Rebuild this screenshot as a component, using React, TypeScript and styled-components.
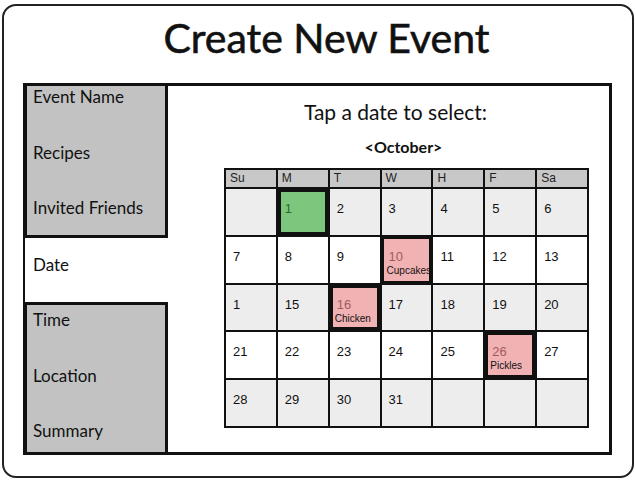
import React from "react";
import styled, { createGlobalStyle, css } from "styled-components";

const GlobalStyle = createGlobalStyle`
  html, body {
    margin: 0;
    padding: 0;
    background: #fff;
  }
  body {
    font-family: "Lato", "Open Sans", sans-serif;
    color: #111;
  }
`;

const Frame = styled.div`
  box-sizing: border-box;
  width: 632px;
  height: 474px;
  margin: 4px 0 0 2px;
  border: 2px solid #222;
  border-radius: 14px;
  padding: 0 20px 21px 19px;
  display: flex;
  flex-direction: column;
`;

const Title = styled.h1`
  margin: 0;
  height: 77px;
  box-sizing: border-box;
  padding: 8px 0 0 18px;
  line-height: 48px;
  text-align: center;
  font-size: 41px;
  font-weight: 400;
  color: #111;
  -webkit-text-stroke: 0.6px #111;
`;

const Body = styled.div`
  flex: 1;
  display: flex;
`;

const TabColumn = styled.div`
  width: 145px;
  display: flex;
  flex-direction: column;
`;

const TabGroup = styled.div<{ $height: number; $top: number }>`
  box-sizing: border-box;
  height: ${p => p.$height}px;
  background: #c2c2c2;
  border: 3px solid #111;
  border-left-width: 4px;
  padding: ${p => p.$top}px 6px 0;
  display: flex;
  flex-direction: column;
  gap: 35.7px;
`;

const TabLabel = styled.div`
  font-size: 17px;
  line-height: 20px;
  color: #111;
  white-space: nowrap;
`;

const ActiveTab = styled.div`
  box-sizing: border-box;
  height: 64px;
  border-left: 2px solid #111;
  padding: 17px 0 0 8px;
  background: #fff;
`;

const Panel = styled.div`
  flex: 1;
  border: 3px solid #111;
  border-left: none;
  display: flex;
  flex-direction: column;
  align-items: center;
  padding: 0 20px 0 56px;
`;

const Prompt = styled.div`
  margin: 13px 22px 0 0;
  font-size: 21px;
  line-height: 26px;
`;

const MonthNav = styled.div`
  margin: 12px 6px 0 0;
  font-size: 16px;
  font-weight: 700;
  line-height: 20px;
`;

const Calendar = styled.div`
  box-sizing: border-box;
  margin-top: 11px;
  width: 365px;
  border: 2px solid #111;
  background: #111;
  display: grid;
  grid-template-columns: repeat(7, 1fr);
  grid-template-rows: 17px repeat(5, 45.8px);
  gap: 2px;
  font-family: "Liberation Sans", Arial, sans-serif;
`;

const DayHead = styled.div`
  background: #c8c8c8;
  font-size: 12px;
  line-height: 16px;
  padding-left: 4px;
  color: #222;
`;

type Tone = "green" | "pink";

const Cell = styled.div<{ $shade: boolean; $tone?: Tone; $ring?: number }>`
  background: ${p => (p.$shade ? "#ededed" : "#fff")};
  padding: 12px 0 0 7px;
  box-sizing: border-box;
  ${p =>
    p.$tone === "green" &&
    css`
      background: #7cc67e;
    `}
  ${p =>
    p.$tone === "pink" &&
    css`
      background: #f1b2b3;
    `}
  ${p =>
    p.$ring &&
    css`
      box-shadow: inset 0 0 0 ${p.$ring}px #111;
    `}
`;

const DayNum = styled.div<{ $tone?: Tone }>`
  font-size: 13px;
  line-height: 16px;
  color: ${p =>
    p.$tone === "green" ? "#2f6a2f" : p.$tone === "pink" ? "#a35a5c" : "#111"};
`;

const EventName = styled.div`
  margin-left: -2px;
  font-size: 10px;
  line-height: 12px;
  color: #111;
`;

interface Day {
  n?: string;
  tone?: Tone;
  ring?: number;
  event?: string;
}

const weeks: Day[][] = [
  [{}, { n: "1", tone: "green", ring: 3 }, { n: "2" }, { n: "3" }, { n: "4" }, { n: "5" }, { n: "6" }],
  [{ n: "7" }, { n: "8" }, { n: "9" }, { n: "10", tone: "pink", ring: 2, event: "Cupcakes" }, { n: "11" }, { n: "12" }, { n: "13" }],
  [{ n: "1" }, { n: "15" }, { n: "16", tone: "pink", ring: 3, event: "Chicken" }, { n: "17" }, { n: "18" }, { n: "19" }, { n: "20" }],
  [{ n: "21" }, { n: "22" }, { n: "23" }, { n: "24" }, { n: "25" }, { n: "26", tone: "pink", ring: 3, event: "Pickles" }, { n: "27" }],
  [{ n: "28" }, { n: "29" }, { n: "30" }, { n: "31" }, {}, {}, {}],
];

const dayHeads = ["Su", "M", "T", "W", "H", "F", "Sa"];

const App = () => {
  return (
    <>
      <GlobalStyle />
      <Frame>
        <Title>Create New Event</Title>
        <Body>
          <TabColumn>
            <TabGroup $height={155} $top={1}>
              <TabLabel>Event Name</TabLabel>
              <TabLabel>Recipes</TabLabel>
              <TabLabel>Invited Friends</TabLabel>
            </TabGroup>
            <ActiveTab>
              <TabLabel>Date</TabLabel>
            </ActiveTab>
            <TabGroup $height={153} $top={5}>
              <TabLabel>Time</TabLabel>
              <TabLabel>Location</TabLabel>
              <TabLabel>Summary</TabLabel>
            </TabGroup>
          </TabColumn>
          <Panel>
            <Prompt>Tap a date to select:</Prompt>
            <MonthNav>&lt;October&gt;</MonthNav>
            <Calendar>
              {dayHeads.map(d => (
                <DayHead key={d}>{d}</DayHead>
              ))}
              {weeks.map((week, wi) =>
                week.map((day, di) => (
                  <Cell
                    key={`${wi}-${di}`}
                    $shade={wi % 2 === 0}
                    $tone={day.tone}
                    $ring={day.ring}
                  >
                    {day.n && <DayNum $tone={day.tone}>{day.n}</DayNum>}
                    {day.event && <EventName>{day.event}</EventName>}
                  </Cell>
                ))
              )}
            </Calendar>
          </Panel>
        </Body>
      </Frame>
    </>
  );
};

export default App;
